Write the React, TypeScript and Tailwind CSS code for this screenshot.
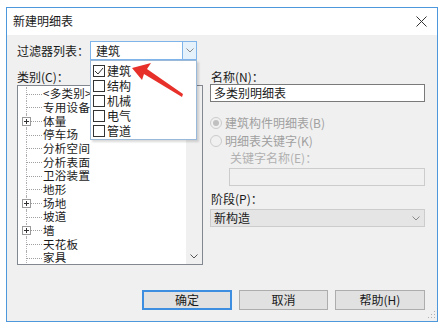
import React from 'react';

const font = { fontFamily: '"Noto Sans CJK SC", "Noto Sans", sans-serif' };

const treeItems: { label: string; plus?: boolean }[] = [
  { label: '<多类别>' },
  { label: '专用设备' },
  { label: '体量', plus: true },
  { label: '停车场' },
  { label: '分析空间' },
  { label: '分析表面' },
  { label: '卫浴装置' },
  { label: '地形' },
  { label: '场地', plus: true },
  { label: '坡道' },
  { label: '墙', plus: true },
  { label: '天花板' },
  { label: '家具' },
  { label: '家具系统' },
];

const filters = [
  { label: '建筑', checked: true },
  { label: '结构' },
  { label: '机械' },
  { label: '电气' },
  { label: '管道' },
];

const Chevron: React.FC<{ color?: string }> = ({ color = '#606060' }) => (
  <svg width="8" height="5" viewBox="0 0 8 5">
    <path d="M0.5 0.5 L4 4 L7.5 0.5" fill="none" stroke={color} strokeWidth="1" />
  </svg>
);

const Radio: React.FC<{ checked?: boolean }> = ({ checked }) => (
  <span className="w-[12px] h-[12px] rounded-full border border-[#cccccc] bg-[#f0f0f0] flex items-center justify-center shrink-0">
    {checked && <span className="w-[6px] h-[6px] rounded-full bg-[#c0c0c0]" />}
  </span>
);

export default function App() {
  return (
    <div className="w-[445px] h-[328px] bg-white relative overflow-hidden text-[12px] text-[#1a1a1a]" style={font}>
      <div className="ml-[6px] mt-[7px] w-[432px] h-[315px] border border-[#4d97dc] flex flex-col">
        {/* Title bar */}
        <div className="h-[27px] bg-white flex items-center justify-between pl-[6px] pr-[10px]">
          <span className="text-[12px] leading-[14px] -mt-[1px]">新建明细表</span>
          <svg width="11" height="11" viewBox="0 0 11 11">
            <path d="M0.5 0.5 L10.5 10.5 M10.5 0.5 L0.5 10.5" stroke="#333" strokeWidth="1" />
          </svg>
        </div>

        {/* Body */}
        <div className="flex-1 bg-[#f0f0f0] flex flex-col pl-[10px] pr-[12px]">
          {/* Filter row */}
          <div className="flex items-center mt-[6px] h-[19px]">
            <span className="w-[73px] leading-[14px]">过滤器列表：</span>
            <div className="w-[107px] h-[19px] border border-[#7eb4ea] bg-white flex">
              <span className="flex-1 pl-[5px] leading-[17px]">建筑</span>
              <span className="w-[14px] bg-[#e5f1fb] border-l border-[#7eb4ea] flex items-center justify-center">
                <Chevron color="#8a8a8a" />
              </span>
            </div>
          </div>

          {/* Columns */}
          <div className="flex mt-[9px] gap-[7px]">
            {/* Left column */}
            <div className="w-[186px] flex flex-col">
              <span className="h-[15px] leading-[15px]">类别(C)：</span>
              <div className="mt-[1px] h-[180px] border border-[#828790] bg-white flex overflow-hidden">
                <div className="flex-1 pt-[1px] overflow-hidden">
                  {treeItems.map((item) => (
                    <div key={item.label} className="h-[13.67px] flex items-center">
                      <div className="w-[25px] h-full relative shrink-0">
                        <span className="absolute left-[8px] top-0 bottom-0 border-l border-dotted border-[#b0b0b0]" />
                        <span className="absolute left-[8px] right-[1px] top-1/2 border-t border-dotted border-[#a0a0a0]" />
                        {item.plus && (
                          <span className="absolute left-[4px] top-[2.5px] w-[9px] h-[9px] border border-[#9a9a9a] bg-white flex items-center justify-center">
                            <svg width="5" height="5" viewBox="0 0 5 5">
                              <path d="M0 2.5 H5 M2.5 0 V5" stroke="#333" strokeWidth="1" />
                            </svg>
                          </span>
                        )}
                      </div>
                      <span className="leading-[13px] text-[11.5px] tracking-[0.3px] whitespace-nowrap">{item.label}</span>
                    </div>
                  ))}
                </div>
                <div className="w-[16px] bg-[#f0f0f0] flex flex-col justify-end items-center pb-[5px]">
                  <Chevron color="#555" />
                </div>
              </div>
            </div>

            {/* Right column */}
            <div className="flex-1 flex flex-col">
              <span className="h-[15px] leading-[15px] pl-[1px]">名称(N)：</span>
              <div className="h-[18px] border border-[#7a7a7a] bg-white pl-[3px] leading-[16px]">多类别明细表</div>
              <div className="mt-[14px] flex items-center gap-[3px] h-[14px] leading-[14px] text-[#a0a0a0]">
                <Radio checked />
                <span>建筑构件明细表(B)</span>
              </div>
              <div className="mt-[4px] flex items-center gap-[3px] h-[14px] leading-[14px] text-[#a0a0a0]">
                <Radio />
                <span>明细表关键字(K)</span>
              </div>
              <span className="mt-[3px] ml-[20px] h-[14px] leading-[14px] text-[#b0b0b0]">关键字名称(E)：</span>
              <div className="mt-[3px] ml-[19px] h-[18px] border border-[#cccccc] bg-[#f0f0f0]" />
              <span className="mt-[6px] h-[14px] leading-[14px] pl-[1px]">阶段(P)：</span>
              <div className="mt-[3px] h-[18px] border border-[#cccccc] bg-[#e5e5e5] flex items-center justify-between pl-[3px] pr-[4px]">
                <span className="leading-[14px]">新构造</span>
                <Chevron color="#8a8a8a" />
              </div>
            </div>
          </div>

          {/* Buttons */}
          <div className="mt-[25px] flex justify-end gap-[7px]">
            <button className="w-[90px] h-[20px] border-2 border-[#3d8ee0] bg-[#e1e1e1] leading-[16px]">确定</button>
            <button className="w-[89px] h-[20px] border border-[#adadad] bg-[#e1e1e1] leading-[18px]">取消</button>
            <button className="w-[90px] h-[20px] border border-[#adadad] bg-[#e1e1e1] leading-[18px]">帮助(H)</button>
          </div>
        </div>
      </div>

      {/* Size grip */}
      <svg className="absolute left-[428px] top-[311px]" width="8" height="8" viewBox="0 0 8 8">
        <rect x="6" y="0" width="1" height="1" fill="#b0b0b0" />
        <rect x="3" y="3" width="1" height="1" fill="#b0b0b0" />
        <rect x="6" y="3" width="1" height="1" fill="#b0b0b0" />
        <rect x="0" y="6" width="1" height="1" fill="#b0b0b0" />
        <rect x="3" y="6" width="1" height="1" fill="#b0b0b0" />
        <rect x="6" y="6" width="1" height="1" fill="#b0b0b0" />
      </svg>

      {/* Dropdown list */}
      <div className="absolute left-[90px] top-[60px] w-[107px] h-[80px] bg-white border border-[#9ab8d8] shadow-[2px_2px_2px_rgba(0,0,0,0.15)] pt-[2px]">
        {filters.map((f) => (
          <div key={f.label} className="h-[15px] flex items-center pl-[2px] gap-[2px]">
            <span className="w-[12px] h-[12px] border border-[#333] bg-white flex items-center justify-center">
              {f.checked && (
                <svg width="10" height="8" viewBox="0 0 10 8">
                  <path d="M1 4 L4 7 L9 1" fill="none" stroke="#333" strokeWidth="1" />
                </svg>
              )}
            </span>
            <span className="leading-[14px]">{f.label}</span>
          </div>
        ))}
      </div>

      {/* Red arrow */}
      <svg className="absolute left-0 top-0 pointer-events-none" width="445" height="328" viewBox="0 0 445 328">
        <polygon points="132,68 151,63 147,69 183,94 182,97 144,74 142,80" fill="#e8302a" />
      </svg>
    </div>
  );
}
